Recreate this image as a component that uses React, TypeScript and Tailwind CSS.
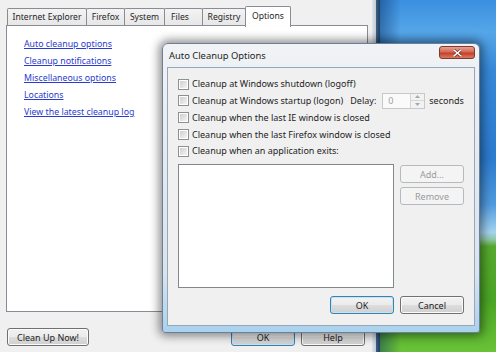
import React from "react";

type BtnKind = "normal" | "default" | "disabled";

function Btn({
  children,
  kind = "normal",
  className = "",
}: {
  children: React.ReactNode;
  kind?: BtnKind;
  className?: string;
}) {
  const base =
    "flex items-center justify-center rounded-[3px] border text-[9px] leading-none";
  const style =
    kind === "default"
      ? "border-[#3c7fb1] text-[#1e1e1e] bg-[linear-gradient(180deg,#f2f2f2_0%,#ebebeb_48%,#dddddd_52%,#cfcfcf_100%)] shadow-[inset_0_0_0_1px_#c2e4f6]"
      : kind === "disabled"
      ? "border-[#b6babd] text-[#9a9a9a] bg-[#f4f4f4]"
      : "border-[#707070] text-[#1e1e1e] bg-[linear-gradient(180deg,#f2f2f2_0%,#ebebeb_48%,#dddddd_52%,#cfcfcf_100%)] shadow-[inset_0_0_0_1px_#fbfbfb]";
  return <div className={`${base} ${style} ${className}`}>{children}</div>;
}

function Check() {
  return (
    <div className="w-[11px] h-[11px] border border-[#8e8f8f] bg-white p-[1px] shrink-0">
      <div className="w-full h-full bg-[linear-gradient(135deg,#cfcfcf,#f4f4f4)]" />
    </div>
  );
}

function Row({
  children,
  h,
}: {
  children: React.ReactNode;
  h: string;
}) {
  return (
    <div className={`flex items-center ${h}`}>
      <Check />
      <div className="ml-[3px] flex items-center whitespace-nowrap">{children}</div>
    </div>
  );
}

export default function App() {
  const links = [
    "Auto cleanup options",
    "Cleanup notifications",
    "Miscellaneous options",
    "Locations",
    "View the latest cleanup log",
  ];
  return (
    <div className="relative w-[496px] h-[352px] overflow-hidden flex font-['Noto_Sans',sans-serif] text-[#1e1e1e]">
      {/* Main window */}
      <div className="w-[372px] h-full bg-[#f0f0f0] flex flex-col pl-[6px] pr-[4px] pt-[5px]">
        {/* tabs */}
        <div className="flex items-end h-[21px] pl-[1px] text-[8.6px]">
          <div className="w-[80px] h-[18px] border border-b-0 border-[#898c95] rounded-t-[2px] bg-[linear-gradient(180deg,#f3f3f3,#e6e6e6)] flex items-center justify-center">
            Internet Explorer
          </div>
          <div className="-ml-px w-[39px] h-[18px] border border-b-0 border-[#898c95] rounded-t-[2px] bg-[linear-gradient(180deg,#f3f3f3,#e6e6e6)] flex items-center justify-center">
            Firefox
          </div>
          <div className="-ml-px w-[41px] h-[18px] border border-b-0 border-[#898c95] rounded-t-[2px] bg-[linear-gradient(180deg,#f3f3f3,#e6e6e6)] flex items-center justify-center">
            System
          </div>
          <div className="-ml-px w-[39px] h-[18px] border border-b-0 border-[#898c95] rounded-t-[2px] bg-[linear-gradient(180deg,#f3f3f3,#e6e6e6)] flex items-center pl-[6px]">
            Files
          </div>
          <div className="-ml-px w-[44px] h-[18px] border border-b-0 border-[#898c95] rounded-t-[2px] bg-[linear-gradient(180deg,#f3f3f3,#e6e6e6)] flex items-center justify-center">
            Registry
          </div>
          <div className="relative z-10 -ml-px w-[46px] h-[21px] -mb-px border border-b-0 border-[#898c95] rounded-t-[2px] bg-white flex items-start pt-[3px] justify-center">
            Options
          </div>
        </div>
        {/* panel */}
        <div className="h-[287px] bg-white border border-[#898c95] -mt-px pl-[17px] pt-[10px] flex flex-col text-[8.8px]">
          {links.map((l) => (
            <div key={l} className="h-[17px] flex items-center">
              <span className="text-[#2a3bd0] underline underline-offset-[1px] decoration-[#2a3bd0]">
                {l}
              </span>
            </div>
          ))}
        </div>
        {/* bottom buttons */}
        <div className="flex mt-[16px] pl-[1px] pr-[3px]">
          <Btn className="w-[82px] h-[18px]">Clean Up Now!</Btn>
          <div className="ml-auto flex gap-[6px]">
            <Btn kind="default" className="w-[64px] h-[18px]">
              OK
            </Btn>
            <Btn className="w-[64px] h-[18px]">Help</Btn>
          </div>
        </div>
      </div>
      {/* main window frame edge */}
      <div className="w-[8px] h-full bg-[linear-gradient(90deg,#e1e5e9_0%,#c3ced8_45%,#3d5d80_55%,#1f3f63_100%)]" />
      {/* desktop */}
      <div className="flex-1 h-full bg-[linear-gradient(90deg,rgba(12,45,100,0.45)_0%,rgba(12,45,100,0)_18%),linear-gradient(180deg,#3a8fe0_0%,#55a6e8_9%,#3688d8_20%,#2b7bcf_45%,#4f9ade_58%,#a5d3f0_66%,#8fc8a8_68%,#56a92e_70%,#4aa524_85%,#69c237_100%)]" />

      {/* Dialog */}
      <div className="absolute left-[162px] top-[43px] w-[318px] h-[290px] rounded-t-[6px] rounded-b-[3px] border border-[#6b8096] bg-[linear-gradient(180deg,#f1f3f6_0%,#e4eaf0_40%,#d8e4ee_80%,#a9d2ee_100%)] shadow-[0_0_10px_3px_rgba(0,0,0,0.45)] flex flex-col pl-[4px] pr-[4px] pt-[23px] pb-[6px]">
        {/* title */}
        <div className="absolute left-[6px] top-[7px] text-[9.4px] leading-none text-[#1e1e1e]">
          Auto Cleanup Options
        </div>
        {/* close button */}
        <div className="absolute right-[4px] top-[2px] w-[36px] h-[13px] rounded-[3px] border border-[#7d3a2e] bg-[linear-gradient(180deg,#e8a08f_0%,#d46a55_45%,#c2402a_55%,#d97b5f_100%)] flex items-center justify-center">
          <svg width="9" height="8" viewBox="0 0 9 8">
            <path d="M1 1 L8 7 M8 1 L1 7" stroke="#5a1a10" strokeWidth="2.6" strokeLinecap="square" />
            <path d="M1 1 L8 7 M8 1 L1 7" stroke="#ffffff" strokeWidth="1.5" strokeLinecap="square" />
          </svg>
        </div>
        {/* client */}
        <div className="flex-1 bg-[#f0f0f0] border border-[#97a7b7] flex flex-col pl-[10px] pr-[10px] pt-[8px] text-[9px]">
          <Row h="h-[16px]">Cleanup at Windows shutdown (logoff)</Row>
          <Row h="h-[17px]">
            <span>Cleanup at Windows startup (logon)</span>
            <span className="ml-[7px]">Delay:</span>
            <div className="ml-[6px] w-[43px] h-[16px] border border-[#c5c8cc] bg-[#fafafa] flex">
              <div className="flex-1 pl-[5px] flex items-center text-[#a0a0a0]">0</div>
              <div className="w-[14px] border-l border-[#d4d6d8] flex flex-col">
                <div className="flex-1 flex items-center justify-center border-b border-[#d4d6d8] bg-[#f2f2f2]">
                  <svg width="5" height="3" viewBox="0 0 5 3">
                    <path d="M0 3 L2.5 0 L5 3 Z" fill="#a8a8a8" />
                  </svg>
                </div>
                <div className="flex-1 flex items-center justify-center bg-[#f2f2f2]">
                  <svg width="5" height="3" viewBox="0 0 5 3">
                    <path d="M0 0 L2.5 3 L5 0 Z" fill="#a8a8a8" />
                  </svg>
                </div>
              </div>
            </div>
            <span className="ml-[4px]">seconds</span>
          </Row>
          <Row h="h-[17px]">Cleanup when the last IE window is closed</Row>
          <Row h="h-[17px]">Cleanup when the last Firefox window is closed</Row>
          <Row h="h-[16px]">Cleanup when an application exits:</Row>
          <div className="flex mt-[5px] gap-[6px]">
            <div className="w-[216px] h-[124px] bg-white border border-[#82878c]" />
            <div className="flex flex-col gap-[4px] pt-[1px]">
              <Btn kind="disabled" className="w-[64px] h-[18px]">
                Add...
              </Btn>
              <Btn kind="disabled" className="w-[64px] h-[18px]">
                Remove
              </Btn>
            </div>
          </div>
          <div className="flex justify-end gap-[6px] mt-[8px]">
            <Btn kind="default" className="w-[64px] h-[18px]">
              OK
            </Btn>
            <Btn className="w-[64px] h-[18px]">Cancel</Btn>
          </div>
        </div>
      </div>
    </div>
  );
}
